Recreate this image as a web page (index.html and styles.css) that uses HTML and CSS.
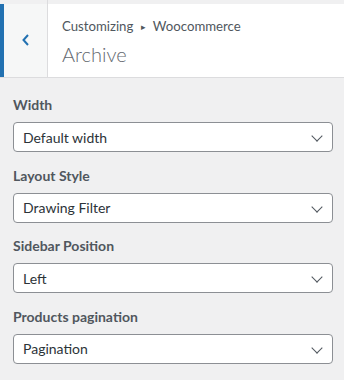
FILE: index.html
```html
<!DOCTYPE html>
<html lang="en">
<head>
  <meta charset="UTF-8">
  <title>Customizing Archive</title>
  <meta name="viewport" content="width=device-width, initial-scale=1">
  <link rel="stylesheet" href="styles.css">
</head>
<body>
  <div class="panel-header">
    <div class="back-col">
      <button class="back-btn" aria-label="Back">
        <svg width="10" height="14" viewBox="0 0 10 14"><polyline points="7,2 2.5,7 7,12" fill="none" stroke="#2271b1" stroke-width="2"/></svg>
      </button>
    </div>
    <div class="title-box">
      <div class="crumbs">Customizing <span class="sep">&#9656;</span> Woocommerce</div>
      <h3 class="title">Archive</h3>
    </div>
  </div>

  <form class="controls" onsubmit="return false;">
    <div class="control">
      <label for="width">Width</label>
      <div class="select-wrap">
        <select id="width"><option>Default width</option></select>
      </div>
    </div>
    <div class="control">
      <label for="layout">Layout Style</label>
      <div class="select-wrap">
        <select id="layout"><option>Drawing Filter</option></select>
      </div>
    </div>
    <div class="control">
      <label for="sidebar">Sidebar Position</label>
      <div class="select-wrap">
        <select id="sidebar"><option>Left</option></select>
      </div>
    </div>
    <div class="control">
      <label for="pagination">Products pagination</label>
      <div class="select-wrap">
        <select id="pagination"><option>Pagination</option></select>
      </div>
    </div>
  </form>
</body>
</html>
```

FILE: styles.css
```css
* { box-sizing: border-box; }
html, body { margin: 0; padding: 0; }

body {
  background: #f0f0f1;
  font-family: Lato, 'Noto Sans', sans-serif;
  color: #50575e;
  width: 344px;
}

/* Header */
.panel-header {
  display: flex;
  height: 78px;
  border-bottom: 1px solid #dcdcde;
}

.back-col {
  width: 48px;
  padding-top: 4px;
  border-right: 1px solid #dcdcde;
}

.back-btn {
  display: flex;
  align-items: center;
  justify-content: center;
  width: 100%;
  height: 73px;
  padding: 0 0 2px 0;
  border: 0;
  border-left: 4px solid #2271b1;
  background: #f6f7f7;
}

.title-box {
  flex: 1;
  margin-top: 4px;
  background: #fff;
  padding: 13px 0 0 14px;
}

.crumbs {
  font-size: 13.2px;
  line-height: 18px;
  color: #50575e;
}

.crumbs .sep { font-size: 9px; margin: 0 4px; vertical-align: 1px; }

.title {
  margin: 5px 0 0;
  font-size: 20px;
  font-weight: 300;
  line-height: 26px;
  color: #646970;
}

/* Controls */
.controls { padding: 17px 11px 0 13px; }

.control { margin-bottom: 13.5px; }

.control label {
  display: block;
  font-size: 14px;
  font-weight: 700;
  line-height: 20px;
  color: #50575e;
  margin-bottom: 7px;
}

.select-wrap { position: relative; }

.select-wrap::after {
  content: '';
  position: absolute;
  right: 12px;
  top: 10px;
  width: 7px;
  height: 7px;
  border-right: 1.5px solid #50575e;
  border-bottom: 1.5px solid #50575e;
  transform: rotate(45deg);
  pointer-events: none;
}

.control select {
  appearance: none;
  -webkit-appearance: none;
  width: 100%;
  height: 30px;
  padding: 0 24px 0 9px;
  border: 1px solid #8c8f94;
  border-radius: 4px;
  background: #fff;
  font-family: inherit;
  font-size: 14px;
  color: #2c3338;
}
```
